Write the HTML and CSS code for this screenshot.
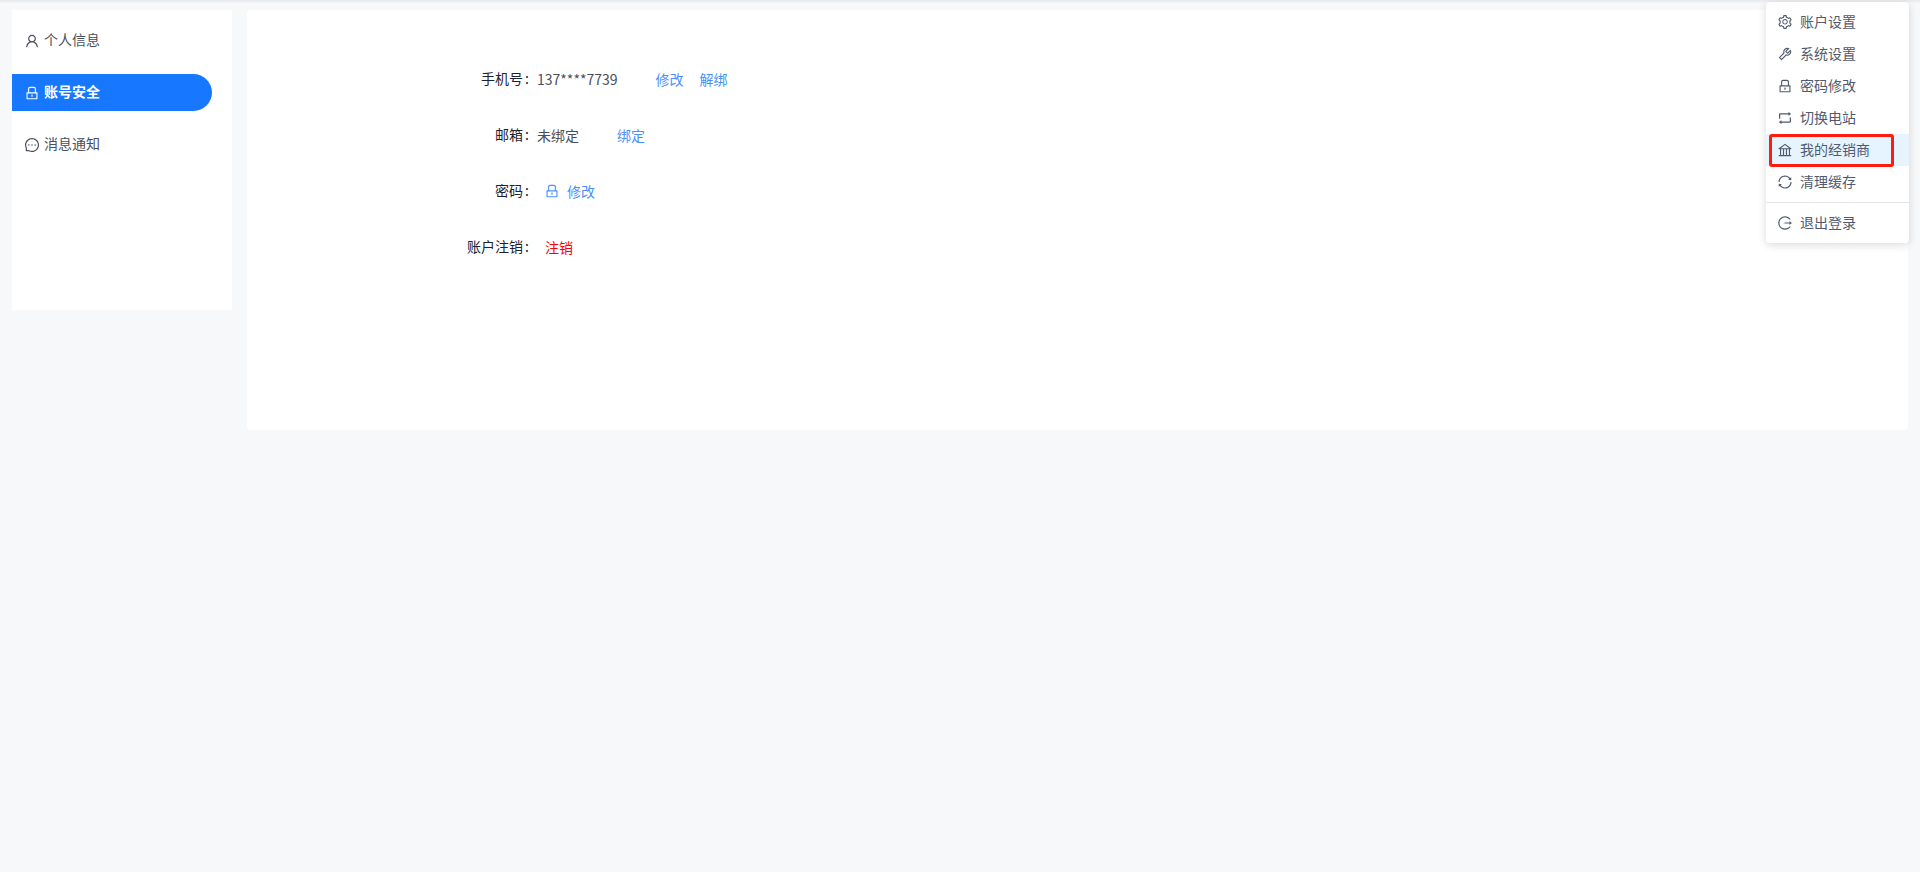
FILE: index.html
```html
<!DOCTYPE html>
<html lang="zh-CN">
<head>
    <meta charset="UTF-8">
    <meta name="viewport" content="width=device-width, initial-scale=1.0">
    <title>账号安全</title>
    <link rel="stylesheet" href="styles.css">
</head>
<body>

<!-- Icons used more than once -->
<svg class="icon-defs" aria-hidden="true">
    <symbol id="icon-lock" viewBox="64 64 896 896">
        <path d="M832 464h-68V240c0-70.7-57.3-128-128-128H388c-70.7 0-128 57.3-128 128v224h-68c-17.7 0-32 14.3-32 32v384c0 17.7 14.3 32 32 32h640c17.7 0 32-14.3 32-32V496c0-17.7-14.3-32-32-32zM332 240c0-30.9 25.1-56 56-56h248c30.9 0 56 25.1 56 56v224H332V240zm460 600H232V536h560v304zM484 701v53c0 4.4 3.6 8 8 8h40c4.4 0 8-3.6 8-8v-53a48.01 48.01 0 10-56 0z"/>
    </symbol>
</svg>

<div class="page">
    <!-- Left menu -->
    <nav class="sidebar">
        <a href="#" class="side-item">
            <svg class="icon" viewBox="64 64 896 896"><path d="M858.5 763.6a374 374 0 00-80.6-119.5 375.63 375.63 0 00-119.5-80.6c-.4-.2-.8-.3-1.2-.5C719.5 518 760 444.7 760 362c0-137-111-248-248-248S264 225 264 362c0 82.7 40.5 156 102.8 201.1-.4.2-.8.3-1.2.5-44.8 18.9-85 46-119.5 80.6a375.63 375.63 0 00-80.6 119.5A371.7 371.7 0 00136 901.8a8 8 0 008 8.2h60c4.4 0 7.9-3.5 8-7.8 2-77.2 33-149.5 87.8-204.3 56.7-56.7 132-87.9 212.2-87.9s155.5 31.2 212.2 87.9C779 752.7 810 825 812 902.2c.1 4.4 3.6 7.8 8 7.8h60a8 8 0 008-8.2c-1-47.8-10.9-94.3-29.5-138.2zM512 534c-45.9 0-89.1-17.9-121.6-50.4S340 407.9 340 362c0-45.9 17.9-89.1 50.4-121.6S466.1 190 512 190s89.1 17.9 121.6 50.4S684 316.1 684 362c0 45.9-17.9 89.1-50.4 121.6S557.9 534 512 534z"/></svg>
            <span>个人信息</span>
        </a>
        <a href="#" class="side-item active">
            <svg class="icon"><use href="#icon-lock"/></svg>
            <span>账号安全</span>
        </a>
        <a href="#" class="side-item">
            <svg class="icon" viewBox="64 64 896 896"><path d="M464 512a48 48 0 1096 0 48 48 0 10-96 0zm200 0a48 48 0 1096 0 48 48 0 10-96 0zm-400 0a48 48 0 1096 0 48 48 0 10-96 0zm661.2-173.6c-22.6-53.7-55-101.9-96.3-143.3a444.35 444.35 0 00-143.3-96.3C630.6 75.7 572.2 64 512 64h-2c-60.6.3-119.3 12.3-174.5 35.9a445.35 445.35 0 00-142 96.5c-40.9 41.3-73 89.3-95.2 142.8-23 55.4-34.6 114.3-34.3 174.9A449.4 449.4 0 00112 714v152a46 46 0 0046 46h152.1A449.4 449.4 0 00510 960h2.1c59.9 0 118-11.6 172.7-34.3a444.48 444.48 0 00142.8-95.2c41.3-40.9 73.8-88.7 96.5-142 23.6-55.2 35.6-113.9 35.9-174.5.3-60.9-11.5-120-34.8-175.6zm-151.1 438C704 845.8 611 884 512 884h-1.7c-60.3-.3-120.2-15.3-173.1-43.5l-8.4-4.5H188V695.2l-4.5-8.4C155.3 633.9 140.3 574 140 513.7c-.4-99.7 37.7-193.3 107.6-263.8 69.8-70.5 163.1-109.5 262.8-109.9h1.7c50 0 98.5 9.7 144.2 28.9 44.6 18.7 84.6 45.6 119 80 34.3 34.3 61.3 74.4 80 119 19.4 46.2 29.1 95.2 28.9 145.8-.6 99.6-39.7 192.9-110.1 262.7z"/></svg>
            <span>消息通知</span>
        </a>
    </nav>

    <!-- Account security settings -->
    <main class="content">
        <dl class="info-list">
            <div class="info-row">
                <dt>手机号</dt>
                <dd>
                    <span class="value">137****7739</span>
                    <button type="button" class="link-btn">修改</button>
                    <button type="button" class="link-btn">解绑</button>
                </dd>
            </div>
            <div class="info-row">
                <dt>邮箱</dt>
                <dd>
                    <span class="value">未绑定</span>
                    <button type="button" class="link-btn">绑定</button>
                </dd>
            </div>
            <div class="info-row">
                <dt>密码</dt>
                <dd>
                    <button type="button" class="link-btn">
                        <svg class="icon"><use href="#icon-lock"/></svg>
                        <span>修改</span>
                    </button>
                </dd>
            </div>
            <div class="info-row">
                <dt>账户注销</dt>
                <dd>
                    <button type="button" class="link-btn danger">注销</button>
                </dd>
            </div>
        </dl>
    </main>
</div>

<!-- User dropdown menu -->
<div class="dropdown" role="menu">
    <button type="button" class="menu-item" role="menuitem">
        <svg class="icon" viewBox="64 64 896 896"><path d="M924.8 625.7l-65.5-56c3.1-19 4.7-38.4 4.7-57.8s-1.6-38.8-4.7-57.8l65.5-56a32.03 32.03 0 009.3-35.2l-.9-2.6a443.74 443.74 0 00-79.7-137.9l-1.8-2.1a32.12 32.12 0 00-35.1-9.5l-81.3 28.9c-30-24.6-63.5-44-99.7-57.6l-15.7-85a32.05 32.05 0 00-25.8-25.7l-2.7-.5c-52.1-9.4-106.9-9.4-159 0l-2.7.5a32.05 32.05 0 00-25.8 25.7l-15.8 85.4a351.86 351.86 0 00-99 57.4l-81.9-29.1a32 32 0 00-35.1 9.5l-1.8 2.1a446.02 446.02 0 00-79.7 137.9l-.9 2.6c-4.5 12.5-.8 26.5 9.3 35.2l66.3 56.6c-3.1 18.8-4.6 38-4.6 57.1 0 19.2 1.5 38.4 4.6 57.1L99 625.5a32.03 32.03 0 00-9.3 35.2l.9 2.6c18.1 50.4 44.9 96.9 79.7 137.9l1.8 2.1a32.12 32.12 0 0035.1 9.5l81.9-29.1c29.8 24.5 63.1 43.9 99 57.4l15.8 85.4a32.05 32.05 0 0025.8 25.7l2.7.5a449.4 449.4 0 00159 0l2.7-.5a32.05 32.05 0 0025.8-25.7l15.7-85a350 350 0 0099.7-57.6l81.3 28.9a32 32 0 0035.1-9.5l1.8-2.1c34.8-41.1 61.6-87.5 79.7-137.9l.9-2.6c4.5-12.3.8-26.3-9.3-35zM788.3 465.9c2.5 15.1 3.8 30.6 3.8 46.1s-1.3 31-3.8 46.1l-6.6 40.1 74.7 63.9a370.03 370.03 0 01-42.6 73.6L721 702.8l-31.4 25.8c-23.9 19.6-50.5 35-79.3 45.8l-38.1 14.3-17.9 97a377.5 377.5 0 01-85 0l-17.9-97.2-37.8-14.5c-28.5-10.8-55-26.2-78.7-45.7l-31.4-25.9-93.4 33.2c-17-22.9-31.2-47.6-42.6-73.6l75.5-64.5-6.5-40c-2.4-14.9-3.7-30.3-3.7-45.5 0-15.3 1.2-30.6 3.7-45.5l6.5-40-75.5-64.5c11.3-26.1 25.6-50.7 42.6-73.6l93.4 33.2 31.4-25.9c23.7-19.5 50.2-34.9 78.7-45.7l37.9-14.3 17.9-97.2c28.1-3.2 56.8-3.2 85 0l17.9 97 38.1 14.3c28.7 10.8 55.4 26.2 79.3 45.8l31.4 25.8 92.8-32.9c17 22.9 31.2 47.6 42.6 73.6L781.8 426l6.5 39.9zM512 326c-97.2 0-176 78.8-176 176s78.8 176 176 176 176-78.8 176-176-78.8-176-176-176zm79.2 255.2A111.6 111.6 0 01512 614c-29.9 0-58-11.7-79.2-32.8A111.6 111.6 0 01400 502c0-29.9 11.7-58 32.8-79.2C454 401.6 482.1 390 512 390c29.9 0 58 11.6 79.2 32.8A111.6 111.6 0 01624 502c0 29.9-11.7 58-32.8 79.2z"/></svg>
        <span>账户设置</span>
    </button>
    <button type="button" class="menu-item" role="menuitem">
        <svg class="icon" viewBox="64 64 896 896"><path d="M876.6 239.5c-.5-.9-1.2-1.8-2-2.5-5-5-13.1-5-18.1 0L684.2 409.3l-67.9-67.9L788.7 169c.8-.8 1.4-1.6 2-2.5 3.6-6.1 1.6-13.9-4.5-17.5-98.2-58-226.8-44.7-311.3 39.7-67 67-89.2 162-66.5 247.4l-293 293c-3 3-2.8 7.9.3 11l169.7 169.7c3.1 3.1 8.1 3.3 11 .3l292.9-292.9c85.5 22.8 180.5.7 247.6-66.4 84.4-84.5 97.7-213.1 39.7-311.3zM786 499.8c-58.1 58.1-145.3 69.3-214.6 33.6l-8.8 8.8-.1-.1-274 274.1-79.2-79.2 230.1-230.1s0 .1.1.1l52.8-52.8c-35.7-69.3-24.5-156.5 33.6-214.6a184.2 184.2 0 01144-53.5L537 318.9a32.05 32.05 0 000 45.3l124.5 124.5a32.05 32.05 0 0045.3 0l132.8-132.8c3.7 51.8-14.4 104.8-53.6 143.9z"/></svg>
        <span>系统设置</span>
    </button>
    <button type="button" class="menu-item" role="menuitem">
        <svg class="icon"><use href="#icon-lock"/></svg>
        <span>密码修改</span>
    </button>
    <button type="button" class="menu-item" role="menuitem">
        <svg class="icon" viewBox="64 64 896 896"><path d="M136 552h63.6c4.4 0 8-3.6 8-8V288.7h528.6v72.6c0 1.9.6 3.7 1.8 5.2a8.3 8.3 0 0011.7 1.4L893 255.4c4.3-5 3.6-10.3 0-13.2L749.7 129.8a8.22 8.22 0 00-5.2-1.8c-4.6 0-8.4 3.8-8.4 8.4V209H199.7c-39.5 0-71.7 32.2-71.7 71.8V544c0 4.4 3.6 8 8 8zm752-80h-63.6c-4.4 0-8 3.6-8 8v255.3H287.8v-72.6c0-1.9-.6-3.7-1.8-5.2a8.3 8.3 0 00-11.7-1.4L131 768.6c-4.3 5-3.6 10.3 0 13.2l143.3 112.4c1.5 1.2 3.3 1.8 5.2 1.8 4.6 0 8.4-3.8 8.4-8.4V815h536.6c39.5 0 71.7-32.2 71.7-71.8V480c-.2-4.4-3.8-8-8.2-8z"/></svg>
        <span>切换电站</span>
    </button>
    <button type="button" class="menu-item selected" role="menuitem">
        <svg class="icon" viewBox="64 64 896 896"><path d="M894 462c30.9 0 43.8-39.7 18.7-58L530.8 126.2a31.81 31.81 0 00-37.6 0L111.3 404c-25.1 18.2-12.2 58 18.8 58H192v374h-72c-4.4 0-8 3.6-8 8v52c0 4.4 3.6 8 8 8h784c4.4 0 8-3.6 8-8v-52c0-4.4-3.6-8-8-8h-72V462h62zM512 196.7l271.1 197.2H240.9L512 196.7zM264 462h117v374H264V462zm189 0h117v374H453V462zm307 374H642V462h118v374z"/></svg>
        <span>我的经销商</span>
    </button>
    <button type="button" class="menu-item" role="menuitem">
        <svg class="icon" viewBox="64 64 896 896"><path d="M168 504.2c1-43.7 10-86.1 26.9-126 17.3-41 42.1-77.7 73.7-109.4S337 212.3 378 195c42.4-17.9 87.4-27 133.9-27s91.5 9.1 133.8 27A341.5 341.5 0 01755 268.8c9.9 9.9 19.2 20.4 27.8 31.4l-60.2 47a8 8 0 003 14.1l175.7 43c5 1.2 9.9-2.6 9.9-7.7l.8-180.9c0-6.7-7.7-10.5-12.9-6.3l-56.4 44.1C765.8 155.1 646.2 92 511.8 92 282.7 92 96.3 275.6 92 503.8a8 8 0 008 8.2h60c4.4 0 7.9-3.5 8-7.8zm756 7.8h-60c-4.4 0-7.9 3.5-8 7.8-1 43.7-10 86.1-26.9 126-17.3 41-42.1 77.8-73.7 109.4A342.45 342.45 0 01512.1 856a342.24 342.24 0 01-243.2-100.8c-9.9-9.9-19.2-20.4-27.8-31.4l60.2-47a8 8 0 00-3-14.1l-175.7-43c-5-1.2-9.9 2.6-9.9 7.7l-.7 181c0 6.7 7.7 10.5 12.9 6.3l56.4-44.1C258.2 868.9 377.8 932 512.2 932c229.2 0 415.5-183.7 419.8-411.8a8 8 0 00-8-8.2z"/></svg>
        <span>清理缓存</span>
    </button>
    <hr class="menu-divider">
    <button type="button" class="menu-item" role="menuitem">
        <svg class="icon" viewBox="64 64 896 896"><path d="M868 732h-70.3c-4.8 0-9.3 2.1-12.3 5.8-7 8.5-14.5 16.7-22.4 24.5a353.84 353.84 0 01-112.7 75.9A352.8 352.8 0 01512.4 866c-47.9 0-94.3-9.4-137.9-27.8a353.84 353.84 0 01-112.7-75.9 353.28 353.28 0 01-76-112.5C167.3 606.2 158 559.9 158 512s9.4-94.2 27.8-137.8c17.8-42.1 43.4-80 76-112.5s70.5-58.1 112.7-75.9c43.6-18.4 90-27.8 137.9-27.8 47.9 0 94.3 9.3 137.9 27.8 42.2 17.8 80.1 43.4 112.7 75.9 7.9 7.9 15.3 16.1 22.4 24.5 3 3.7 7.6 5.8 12.3 5.8H868c6.3 0 10.2-7 6.7-12.3C798 160.5 663.8 81.6 511.3 82 271.7 82.6 79.6 277.1 82 516.4 84.4 751.9 276.2 942 512.4 942c152.1 0 285.7-78.8 362.3-197.7 3.4-5.3-.4-12.3-6.7-12.3zm88.9-226.3L815 393.7c-5.3-4.2-13-.4-13 6.3v76H488c-4.4 0-8 3.6-8 8v56c0 4.4 3.6 8 8 8h314v76c0 6.7 7.8 10.5 13 6.3l141.9-112a8 8 0 000-12.6z"/></svg>
        <span>退出登录</span>
    </button>
</div>

</body>
</html>
```
FILE: styles.css
```css
*, *::after {
    box-sizing: border-box;
}
body {
    margin: 0;
    min-height: 100vh;
    background-color: #f7f8fa;
    box-shadow: inset 0 4px 2px -2px #eaebef;
    color: #515a6e;
    font-family: "Noto Sans CJK SC", sans-serif;
    font-size: 14px;
    line-height: 22px;
}
button {
    margin: 0;
    border: none;
    background: none;
    color: inherit;
    font: inherit;
    cursor: pointer;
}
.icon-defs {
    position: absolute;
    width: 0;
    height: 0;
}
.icon {
    flex: none;
    width: 14px;
    height: 14px;
    fill: currentColor;
}
.page {
    display: flex;
    align-items: flex-start;
    gap: 15px;
    padding: 10px 12px;
}

/* Left menu */
.sidebar {
    display: flex;
    flex-direction: column;
    flex: none;
    gap: 15px;
    width: 220px;
    min-height: 300px;
    padding: 12px 20px 12px 0;
    background-color: white;
}
.side-item {
    display: flex;
    align-items: center;
    gap: 5px;
    height: 37px;
    padding-left: 13px;
    border-radius: 0 20px 20px 0;
    color: #4b4f5c;
    text-decoration: none;
}
.side-item span {
    padding-bottom: 3px;
}
.side-item.active {
    background-color: #1777ff;
    color: white;
    font-weight: bold;
}

/* Settings panel */
.content {
    flex: 1;
    min-height: 420px;
    padding: 53px 0;
    border-radius: 4px;
    background-color: white;
}
.info-list {
    display: flex;
    flex-direction: column;
    gap: 24px;
    margin: 0;
}
.info-row {
    display: grid;
    grid-template-columns: 290px 1fr;
    align-items: center;
    height: 32px;
}
.info-row dt {
    padding-bottom: 2px;
    color: #1c2230;
    text-align: right;
}
.info-row dt::after {
    content: ":";
    margin: 0 8px 0 2px;
}
.info-row dd {
    display: flex;
    align-items: center;
    margin: 0;
}
.value {
    margin-right: 30px;
    color: #4b4f5c;
}
.link-btn {
    display: flex;
    align-items: center;
    gap: 8px;
    padding: 0 8px;
    color: #4a8fff;
}
.link-btn.danger {
    color: #ff0000;
}

/* User dropdown */
.dropdown {
    position: absolute;
    top: 2px;
    right: 11px;
    width: 143px;
    padding: 4px 0;
    border-radius: 4px;
    background-color: white;
    box-shadow: 0 2px 8px rgba(0, 0, 0, 0.15);
}
.menu-item {
    position: relative;
    display: flex;
    align-items: center;
    gap: 8px;
    width: 100%;
    height: 32px;
    padding: 0 12px;
}
.menu-item span {
    padding-bottom: 2px;
}
.menu-item.selected {
    background-color: #e6f4ff;
}
.menu-item.selected::after {
    content: "";
    position: absolute;
    top: 0;
    left: 3px;
    right: 15px;
    height: 33px;
    border: 3px solid #ff1c0e;
    border-radius: 3px;
}
.menu-divider {
    height: 1px;
    margin: 4px 0;
    border: none;
    background-color: #e4e5e8;
}
```
